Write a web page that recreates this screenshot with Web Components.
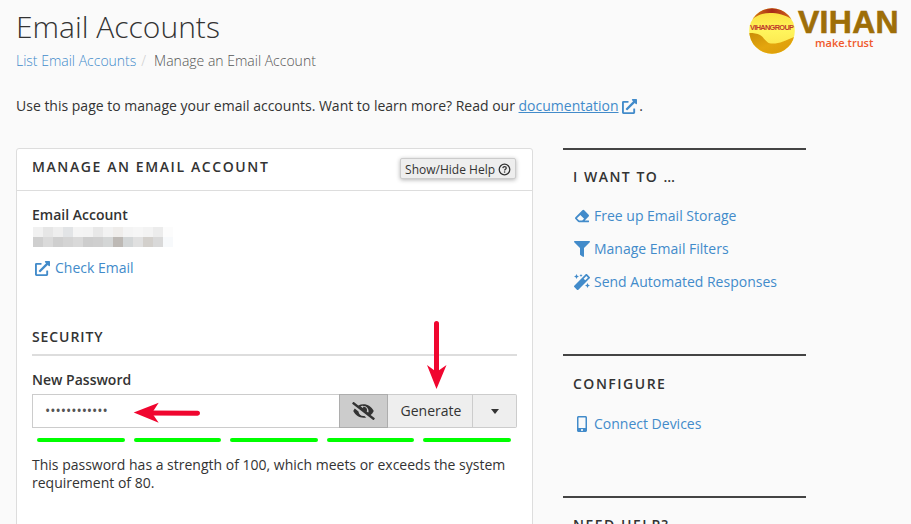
<!DOCTYPE html>
<html lang="en"><head><meta charset="utf-8"><title>Email Accounts</title>
<style>
html,body{margin:0;padding:0;height:524px;overflow:hidden;background:#fafafa}
body{font:14px/20px "Open Sans",sans-serif;color:#333}
</style></head><body>
<email-page></email-page>
<script>
const ICONS={
 ext:'<svg viewBox="0 0 512 512" width="15" height="15"><path fill="currentColor" d="M432 320h-32a16 16 0 0 0-16 16v112H64V128h144a16 16 0 0 0 16-16V80a16 16 0 0 0-16-16H48a48 48 0 0 0-48 48v352a48 48 0 0 0 48 48h352a48 48 0 0 0 48-48V336a16 16 0 0 0-16-16zM488 0H360c-21.400 0-32 25.900-17 41l35.700 35.700L135 320.400a24 24 0 0 0 0 34l22.700 22.600a24 24 0 0 0 34 0l243.600-243.700L471 169c15 15 41 4.500 41-17V24a24 24 0 0 0-24-24z"/></svg>',
 eraser:'<svg viewBox="0 0 512 512" width="16" height="14"><path fill="currentColor" d="M497.900 273.900a48 48 0 0 0 0-67.900l-160-160a48 48 0 0 0-67.900 0l-256 256a48 48 0 0 0 0 67.900l96 96A48 48 0 0 0 144 480h356a12 12 0 0 0 12-12v-40a12 12 0 0 0-12-12H355.900l142-142.100zM195.500 218.500l137.400 137.400L265 416H150.600l-80-80 124.900-117.500z"/></svg>',
 filter:'<svg viewBox="0 0 512 512" width="16" height="16"><path fill="currentColor" d="M487.976 0H24.028C2.710 0-8.047 25.866 7.058 40.971L192 225.941V432c0 7.831 3.821 15.170 10.237 19.662l80 55.980C298.020 518.690 320 507.493 320 487.980V225.941l184.947-184.970C520.021 25.896 509.338 0 487.976 0z"/></svg>',
 wand:'<svg viewBox="0 0 512 512" width="16" height="16"><path fill="currentColor" d="M224 96l16-32 32-16-32-16-16-32-16 32-32 16 32 16zM80 160l26.700-53.300L160 80l-53.300-26.700L80 0 53.300 53.300 0 80l53.300 26.700zm352 128l-26.700 53.300L352 368l53.300 26.700L432 448l26.700-53.300L512 368l-53.300-26.700zm70.600-193.800L417.800 9.400C411.500 3.100 403.300 0 395.200 0c-8.200 0-16.400 3.100-22.600 9.400L9.400 372.500c-12.500 12.500-12.500 32.800 0 45.300l84.900 84.900c6.200 6.200 14.400 9.400 22.600 9.400 8.200 0 16.400-3.100 22.600-9.400l363.100-363.200c12.500-12.400 12.500-32.700 0-45.200zM359.500 203.500l-50.900-50.900 86.600-86.600 50.900 50.900z"/></svg>',
 phone:'<svg viewBox="0 0 320 512" width="10" height="16"><path fill="currentColor" d="M272 0H48C21.500 0 0 21.500 0 48v416c0 26.500 21.500 48 48 48h224c26.500 0 48-21.500 48-48V48c0-26.500-21.500-48-48-48zM160 480c-17.700 0-32-14.300-32-32s14.300-32 32-32 32 14.300 32 32-14.300 32-32 32zm112-108c0 6.600-5.400 12-12 12H60c-6.600 0-12-5.400-12-12V60c0-6.600 5.400-12 12-12h200c6.600 0 12 5.400 12 12v312z"/></svg>',
 eyeslash:'<svg viewBox="0 0 640 512" width="23" height="18"><path fill="currentColor" d="M320 400c-75.900 0-137.300-58.700-142.900-133.100L72.200 185.800c-13.800 17.300-26.500 35.600-36.700 55.600a32.400 32.400 0 0 0 0 29.200C89.700 376.400 197.100 448 320 448c26.900 0 52.900-4 77.900-10.500L346 397.400a144.100 144.100 0 0 1-26 2.600zm313.800 58.100l-110.600-85.500a331.300 331.300 0 0 0 81.300-102c5.800-9.100 5.800-20.100 0-29.200C550.300 135.600 442.900 64 320 64a308.200 308.200 0 0 0-147.300 37.700L45.500 3.400A16 16 0 0 0 23 6.200L3.400 31.500A16 16 0 0 0 6.200 54l588.300 454.700a16 16 0 0 0 22.500-2.800l19.600-25.300a16 16 0 0 0-2.800-22.500zM450 300.400l-39.300-30.400a94.800 94.800 0 0 0 5.300-14 95 95 0 0 0-114.700-118.900 47.900 47.900 0 0 1 9.300 28.300 46.600 46.600 0 0 1-1.500 10l-73.600-56.900A142.300 142.300 0 0 1 320 112a144 144 0 0 1 144 144c0 16.200-4 31.300-9 44.400z"/></svg>'
};
function def(name,css,html){
  customElements.define(name,class extends HTMLElement{
    constructor(){super();const r=this.attachShadow({mode:'open'});r.innerHTML='<style>'+css+'</style>'+(typeof html==='function'?html(this):html);}
  });
}
def('icon-link',`:host{display:flex;align-items:center;height:20px;color:#428bca;font-size:14px;line-height:20px}
 .i{width:17px;display:flex;justify-content:center;margin-right:4px;flex:none}`,
 el=>`<span class="i">${ICONS[el.getAttribute('icon')]}</span><slot></slot>`);

def('vihan-logo',`:host{display:block;width:150px;height:58px;position:relative}
 svg{position:absolute;left:0;top:8px}
 .v{position:absolute;left:49px;top:9px;font:700 31px/28px "Liberation Sans",sans-serif;color:#9e6e08;letter-spacing:.3px;-webkit-text-stroke:.6px #9e6e08;white-space:nowrap;transform:scaleX(1.03);transform-origin:0 0}
 .m{position:absolute;left:66px;top:37px;font:600 11px/12px "Open Sans",sans-serif;color:#f0582a;white-space:nowrap}`,
 `<svg width="46" height="46" viewBox="0 0 46 46">
 <defs><clipPath id="c"><circle cx="23" cy="23" r="22.800"/></clipPath>
 <linearGradient id="y" x1="0" y1="0" x2="0" y2="1"><stop offset="0" stop-color="#fbdc3a"/><stop offset=".5" stop-color="#fff55c"/><stop offset="1" stop-color="#fbe04a"/></linearGradient>
 <linearGradient id="o" x1="0" y1="0" x2="1" y2="1"><stop offset="0" stop-color="#c98d08"/><stop offset=".5" stop-color="#e4a60e"/><stop offset="1" stop-color="#d99a08"/></linearGradient>
 <linearGradient id="r" x1="0" y1="0" x2="1" y2="0"><stop offset="0" stop-color="#e08a14"/><stop offset=".5" stop-color="#a82a18"/><stop offset="1" stop-color="#d8701a"/></linearGradient></defs>
 <g clip-path="url(#c)"><rect width="46" height="46" fill="url(#y)"/>
 <path d="M0 14C8 7 14 5 21 5c8 0 14 1 25 8V0H0z" fill="url(#r)"/>
 <path d="M0 25c5 0 8 .5 11 2 4 2 6 8 11 8.500 8 .5 14-2.500 24-7V46H0z" fill="url(#o)"/></g>
 <text x="1" y="21.500" font-family="Liberation Sans" font-weight="700" font-size="7.400" fill="#c0392b" textLength="44">VIHANGROUP</text></svg>
 <span class="v">VIHAN</span><span class="m">make.trust</span>`);

def('page-head',`:host{display:block;position:relative}
 h1{margin:0;padding-top:8px;font:300 30px/38px "Open Sans",sans-serif;color:#333}
 .bc{margin-top:5px;height:20px;font-size:14px;line-height:20px;color:#555;font-weight:300;display:flex}
 .bc a{color:#428bca;}
 .bc i{font-style:normal;color:#ccc;padding:0 8px 0 5px}
 vihan-logo{position:absolute;left:733px;top:0}
 p{margin:0;padding-top:25px;font-size:14px;line-height:20px;color:#333}
 p a{color:#428bca;text-decoration:underline}
 p svg{color:#428bca;vertical-align:-3px;margin-left:3px;margin-right:-1px}`,
 `<h1>Email Accounts</h1><div class="bc"><a>List Email Accounts</a><i>/</i><span>Manage an Email Account</span></div>
 <vihan-logo></vihan-logo>
 <p>Use this page to manage your email accounts. Want to learn more? Read our <a>documentation</a>${ICONS.ext} .</p>`);

def('manage-panel',`:host{display:block;box-sizing:border-box;width:517px;height:400px;background:#fff;border:1px solid #ddd;border-radius:3px;position:relative;color:#333}
 header{display:flex;justify-content:space-between;align-items:flex-start;height:41px;padding:0 15px;border-bottom:1px solid #ddd;box-sizing:content-box}
 h2{margin:0;padding-top:8px;font:600 14px/20px "Open Sans",sans-serif;letter-spacing:1.600px;text-transform:uppercase}
 .help{margin:9px 1px 0 0;height:21px;box-sizing:border-box;border:1px solid #ccc;border-radius:2px;background:#eee;box-shadow:0 1px 4px rgba(0,0,0,.3);font-size:12px;line-height:19px;padding:1px 4px 0;display:flex;align-items:center;gap:3px;color:#333}
 .body{padding:14px 15px 0}
 label{display:block;font-weight:600;font-size:14px;line-height:20px}
 .blur{display:grid;grid-template-columns:repeat(14,10px);grid-auto-rows:10px;height:20px;margin-top:2px;margin-left:1px}
 .blur b{display:block}
 icon-link{margin-top:11px;margin-left:2px}
 h3{margin:50px 0 0;height:26px;border-bottom:2px solid #ddd;font:600 14px/18px "Open Sans",sans-serif;letter-spacing:.9px;text-transform:uppercase}
 .pw{margin-top:14px}
 .row{display:flex;height:34px;margin-top:4px;box-sizing:border-box;font-size:14px}
 .inp{flex:1;border:1px solid #ccc;border-right:0;background:#fff;padding-left:12px;letter-spacing:-.03px;color:#555;font-size:14px;display:flex;align-items:center}
 .eye{width:49px;box-sizing:border-box;background:#ccc;border:1px solid #adadad;display:flex;align-items:center;justify-content:center;color:#333}
 .gen{width:85px;box-sizing:border-box;background:#eee;border:1px solid #ccc;border-left:0;padding-left:2px;display:flex;align-items:center;justify-content:center;color:#333}
 .dd{width:44px;box-sizing:border-box;background:#eee;border:1px solid #ccc;border-left:0;border-radius:0 2px 2px 0;display:flex;align-items:center;justify-content:center}
 .dd i{border:4.500px solid transparent;border-top:5px solid #333;border-bottom:0}
 .bars{display:flex;gap:9px;margin:10px 6px 0 5px}
 .bars i{flex:1;height:4px;border-radius:2px;background:#0f0}
 .msg{margin:14px 0 0;font-size:14px;line-height:18px;width:480px}`,
 ()=>{const g=['#f1f1f1','#e6e6e6','#eeeeee','#e2e4e6','#f4f4f4','#f3f3f3','#e8e8e8','#f2f2f2','#efedeb','#f4f4f4','#f6f6f6','#f3f3f3','#ececec','#fcfcfc',
              '#cfcfcf','#dadada','#cfcfcf','#d4d4d4','#d9d9d9','#cdcdcd','#cfcfcf','#d4d6d6','#bdb9b5','#d3d6d7','#e0e0e0','#d3d0cc','#d9d9d9','#f7f9fb'];
 return `<header><h2>Manage an Email Account</h2><div class="help">Show/Hide Help <svg viewBox="0 0 16 16" width="13" height="13"><circle cx="8" cy="8" r="6.500" fill="none" stroke="#333" stroke-width="1.600"/><path d="M5.900 6.300c.2-1.200 1.100-1.800 2.200-1.800 1.200 0 2.100.7 2.100 1.800 0 1.500-2.100 1.400-2.100 3" fill="none" stroke="#333" stroke-width="1.500"/><rect x="7.300" y="10.300" width="1.600" height="1.600" fill="#333"/></svg></div></header>
 <div class="body"><label>Email Account</label>
 <div class="blur">${g.map(c=>`<b style="background:${c}"></b>`).join('')}</div>
 <icon-link icon="ext">Check Email</icon-link>
 <h3>Security</h3>
 <label class="pw">New Password</label>
 <div class="row"><div class="inp">••••••••••••</div><div class="eye">${ICONS.eyeslash}</div><div class="gen">Generate</div><div class="dd"><i></i></div></div>
 <div class="bars"><i></i><i></i><i></i><i></i><i></i></div>
 <p class="msg">This password has a strength of 100, which meets or exceeds the system requirement of 80.</p></div>
 <svg style="position:absolute;left:0;top:0;pointer-events:none" width="515" height="398" viewBox="0 0 515 398">
 <path d="M419.500 174.500L419.500 222" stroke="#f0062f" stroke-width="5" stroke-linecap="round" fill="none"/>
 <path d="M410 216 L419.500 223 L429.500 216 L419.500 240Z" fill="#f0062f"/>
 <path d="M180.500 264.300L130 264" stroke="#f0062f" stroke-width="5" stroke-linecap="round" fill="none"/>
 <path d="M141.700 253.700 L116.700 263.500 L141.700 273.700 L135 264Z" fill="#f0062f"/></svg>`;});

def('side-section',`:host{display:block;border-top:2px solid #444;padding:0 10px;box-sizing:border-box}
 h2{margin:0;padding-top:var(--t,17px);font:600 14px/20px "Open Sans",sans-serif;letter-spacing:1.500px;text-transform:uppercase;color:#333}
 .l{display:flex;flex-direction:column;gap:13px;margin-top:var(--l,19px)}`,
 `<h2><slot name="t"></slot></h2><div class="l"><slot></slot></div>`);

def('side-bar',`:host{display:block;width:243px;margin-left:30px;flex:none}
 .a{height:206px}
 .b{height:142px;--t:18px;--l:20px}
 .c{height:60px}`,
 `<side-section class="a"><span slot="t">I Want To …</span><icon-link icon="eraser">Free up Email Storage</icon-link><icon-link icon="filter">Manage Email Filters</icon-link><icon-link icon="wand">Send Automated Responses</icon-link></side-section>
 <side-section class="b"><span slot="t">Configure</span><icon-link icon="phone">Connect Devices</icon-link></side-section>
 <side-section class="c"><span slot="t">Need Help?</span></side-section>`);

def('email-page',`:host{display:block;padding:0 16px;height:524px;overflow:hidden;box-sizing:border-box}
 .cols{display:flex;margin-top:32px;align-items:flex-start}`,
 `<page-head></page-head><div class="cols"><manage-panel></manage-panel><side-bar></side-bar></div>`);
</script></body></html>
